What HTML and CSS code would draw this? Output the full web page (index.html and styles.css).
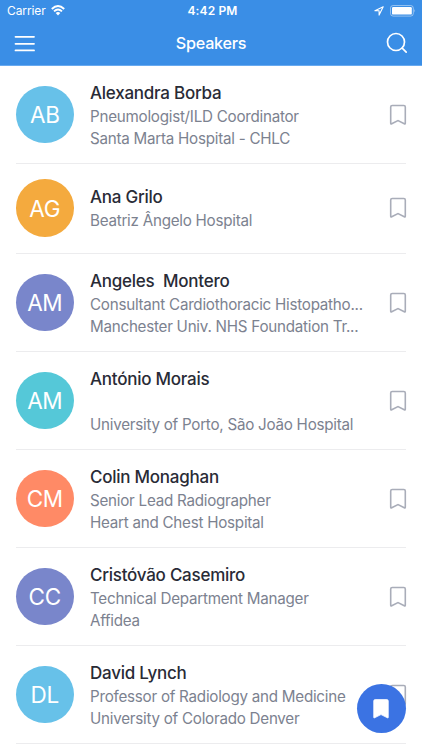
FILE: index.html
```
<!DOCTYPE html>
<html lang="en">
<head>
<meta charset="utf-8">
<title>Speakers</title>
<link rel="stylesheet" href="styles.css">
</head>
<body>
<svg width="0" height="0" class="defs">
  <symbol id="bookmark" viewBox="0 0 18 22"><path d="M3.2 1.5H14.8Q16.3 1.5 16.3 3V19.3Q16.3 20.4 15.3 19.8L9 16.6L2.7 19.8Q1.7 20.4 1.7 19.3V3Q1.7 1.5 3.2 1.5Z"/></symbol>
</svg>
<header class="header">
  <div class="status">
    <div class="status-left"><span class="carrier">Carrier</span>
      <svg width="14" height="11" viewBox="0 0 14 11" fill="none" stroke="#fff" stroke-width="1.9"><path d="M.8 4Q7-1.8 13.2 4M3 6.4Q7 2.8 11 6.4"/><path d="M4.7 8Q7 6.1 9.3 8L7 10.4Z" fill="#fff" stroke="none"/></svg>
    </div>
    <span class="time">4:42 PM</span>
    <div class="status-right">
      <svg width="10" height="10" viewBox="0 0 10 10" fill="none" stroke="#fff" stroke-width="1.1" stroke-linejoin="round"><path d="M9.2.8L.9 4.7H5.1V9.1Z"/></svg>
      <svg width="26" height="12" viewBox="0 0 26 12"><rect x=".5" y=".5" width="22.8" height="10.6" rx="2.6" fill="none" stroke="#fff" stroke-opacity=".45"/><rect x="2" y="2" width="19.8" height="7.6" rx="1.2" fill="#fff"/><path d="M24.4 4Q25.8 5.7 24.4 7.5Z" fill="#fff" opacity=".5"/></svg>
    </div>
  </div>
  <nav class="nav">
    <svg width="22" height="18" viewBox="0 0 22 18" stroke="#fff" stroke-width="1.8" stroke-linecap="round"><path d="M1.5 2.8H20M1.5 9.8H20M1.5 16.4H20"/></svg>
    <h1>Speakers</h1>
    <svg width="22" height="22" viewBox="0 0 22 22" fill="none" stroke="#fff" stroke-width="1.7" stroke-linecap="round"><circle cx="10" cy="10" r="8.5"/><path d="M16.2 16.2L20.2 20.2"/></svg>
  </nav>
</header>
<main class="list">
  <article class="row"><div class="avatar sky">AB</div><div class="info"><h2>Alexandra Borba</h2><p>Pneumologist/ILD Coordinator</p><p>Santa Marta Hospital - CHLC</p></div><svg class="mark"><use href="#bookmark"/></svg></article>
  <article class="row short"><div class="avatar orange">AG</div><div class="info"><h2>Ana Grilo</h2><p>Beatriz Ângelo Hospital</p></div><svg class="mark"><use href="#bookmark"/></svg></article>
  <article class="row"><div class="avatar indigo">AM</div><div class="info"><h2>Angeles  Montero</h2><p>Consultant Cardiothoracic Histopatho...</p><p>Manchester Univ. NHS Foundation Tr...</p></div><svg class="mark"><use href="#bookmark"/></svg></article>
  <article class="row"><div class="avatar teal">AM</div><div class="info"><h2>António Morais</h2><p></p><p>University of Porto, São João Hospital</p></div><svg class="mark"><use href="#bookmark"/></svg></article>
  <article class="row"><div class="avatar coral">CM</div><div class="info"><h2>Colin Monaghan</h2><p>Senior Lead Radiographer</p><p>Heart and Chest Hospital</p></div><svg class="mark"><use href="#bookmark"/></svg></article>
  <article class="row"><div class="avatar indigo">CC</div><div class="info"><h2>Cristóvão Casemiro</h2><p>Technical Department Manager</p><p>Affidea</p></div><svg class="mark"><use href="#bookmark"/></svg></article>
  <article class="row"><div class="avatar sky">DL</div><div class="info"><h2>David Lynch</h2><p>Professor of Radiology and Medicine</p><p>University of Colorado Denver</p></div><svg class="mark"><use href="#bookmark"/></svg></article>
</main>
<button class="fab" aria-label="Bookmarks"><svg><use href="#bookmark"/></svg></button>
</body>
</html>
```
FILE: styles.css
```
* { box-sizing: border-box; }
body { margin: 0; height: 750px; overflow: hidden; background: #fff; font-family: Inter, "Liberation Sans", sans-serif; }
h1, h2, p { margin: 0; white-space: pre; }
svg { display: block; flex: none; }
.defs { position: absolute; }
.header { height: 65.5px; background: #3a8ee6; border-bottom: 1px solid #68aaf0; color: #fff; }
.status { height: 21px; display: grid; grid-template-columns: 1fr auto 1fr; align-items: center; padding: 0 6px 0 7px; }
.status-left, .status-right { display: flex; align-items: center; }
.status-left { gap: 5px; }
.status-right { justify-content: flex-end; gap: 6px; }
.carrier { font-size: 12px; letter-spacing: -.1px; }
.time { font-size: 12px; font-weight: 600; letter-spacing: .15px; padding-left: 2px; }
.nav { height: 43px; display: grid; grid-template-columns: 22px 1fr 22px; align-items: center; padding: 0 14px; }
.nav h1 { text-align: center; font-size: 16.2px; font-weight: 500; letter-spacing: -.25px; }
.list { padding: 0 16px; }
.row { height: 98px; display: flex; align-items: center; padding-top: 1px; border-bottom: 1px solid #ececee; }
.row.short { height: 90px; padding-top: 0; }
.avatar { width: 57.5px; height: 57.5px; flex: none; border-radius: 50%; display: flex; align-items: center; justify-content: center; color: #fff; font-size: 22.5px; letter-spacing: -.3px; }
.sky { background: #67c1e9; }
.orange { background: #f4aa3e; }
.indigo { background: #7986cb; }
.teal { background: #55c8d8; }
.coral { background: #ff8a66; }
.info { flex: 1; min-width: 0; margin-left: 16.5px; padding-top: 1px; }
.info h2 { font-size: 17px; line-height: 24px; font-weight: 500; letter-spacing: -.25px; color: #292b36; }
.info p { height: 22.5px; font-size: 15.2px; line-height: 23px; letter-spacing: -.255px; color: #7c8290; }
.mark { width: 18px; height: 22px; margin-right: -1px; fill: none; stroke: #a9adb9; stroke-width: 1.6; }
.fab { position: absolute; left: 356.5px; top: 684.2px; width: 49px; height: 49px; border: 0; border-radius: 50%; padding: 0; background: #3b73e3; display: flex; align-items: center; justify-content: center; }
.fab svg { width: 18px; height: 22px; fill: #fff; stroke: #fff; stroke-width: .7; }
```
